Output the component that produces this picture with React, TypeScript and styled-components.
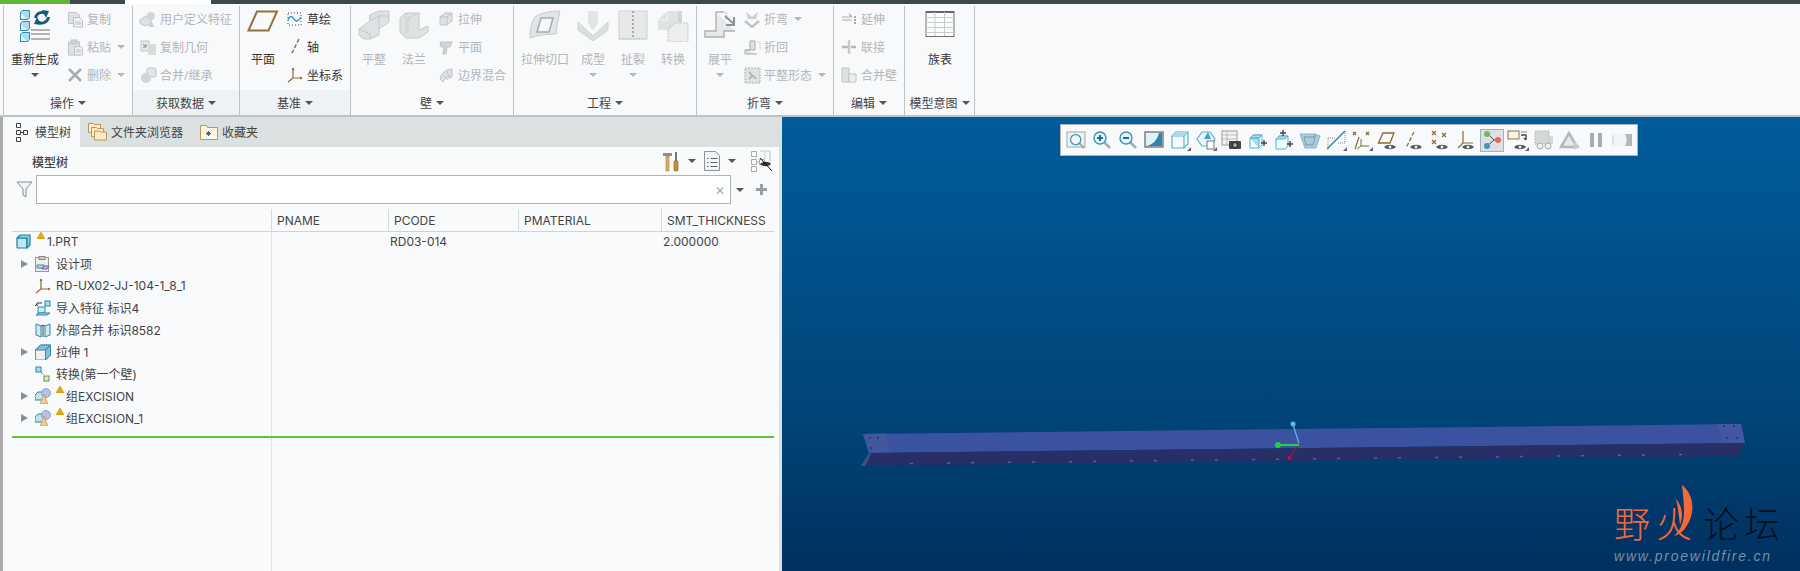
import React from "react";
import styled, { createGlobalStyle } from "styled-components";

const GlobalStyle = createGlobalStyle`
  html, body { margin: 0; padding: 0; background: #f8f9fb; }
  * { box-sizing: border-box; }
  body { font-family: "Noto Sans", "Noto Sans CJK SC", sans-serif; font-size: 12px; color: #444; }
`;

const CJK = `"Noto Sans", "Noto Sans CJK SC", sans-serif`;
const GRID = "259px 117px 130px 143px 113px";

// ---------- icons ----------
const Glyph = styled.svg`
  display: block;
  flex: none;
`;

type GlyphProps = { w: number; h: number; children: React.ReactNode };
const G = ({ w, h, children }: GlyphProps) => (
  <Glyph width={w} height={h} viewBox={`0 0 ${w} ${h}`} fill="none">
    {children}
  </Glyph>
);

const CUBE = "#a9dcec";
const BLUE = "#2f86a8";
const BROWN = "#8a6a30";
const GR = "#bfc3c5";
const GF = "#dfe2e3";

const Cube = ({ x, y, s = 9 }: { x: number; y: number; s?: number }) => (
  <g>
    <rect x={x} y={y + 2} width={s - 2} height={s - 2} fill="#dff3f9" stroke={BLUE} />
    <path d={`M${x} ${y + 2}l2-2h${s - 2}v${s - 2}l-2 2`} fill={CUBE} stroke={BLUE} />
  </g>
);

const Regen = () => (
  <G w={30} h={32}>
    <Cube x={0.5} y={0.5} />
    <Cube x={0.5} y={11.500} />
    <Cube x={0.5} y={22.500} />
    <path d="M15.500 8a6.500 6.500 0 0 1 10-4.500" stroke="#14597f" strokeWidth="2.800" />
    <path d="M22 0l7 1-3 7z" fill="#14597f" />
    <path d="M28.500 7a6.500 6.500 0 0 1-10 5" stroke="#14597f" strokeWidth="2.800" />
    <path d="M21 15l-7-1 3-7z" fill="#14597f" />
    <path d="M11 20h19M11 24h19M11 29h19" stroke="#9a9a9a" strokeWidth="1.400" />
  </G>
);
const CopyI = () => (
  <G w={17} h={17}>
    <path d="M1.500 1.500h8l3 3v8h-11z" fill={GF} stroke={GR} />
    <path d="M6.500 6.500h6l3 3v6.500h-9z" fill="#eef0f1" stroke={GR} />
    <path d="M8 11h6M8 13h6" stroke={GR} />
  </G>
);
const PasteI = () => (
  <G w={17} h={17}>
    <rect x="1.500" y="3" width="11" height="13" fill={GF} stroke={GR} />
    <rect x="4" y="1" width="6" height="4" fill="#cfd2d3" stroke={GR} />
    <path d="M7.500 7.500h6l2 2v6.500h-8z" fill="#eef0f1" stroke={GR} />
    <path d="M9 11h5M9 13h5" stroke={GR} />
  </G>
);
const DeleteI = () => (
  <G w={16} h={16}>
    <path d="M2 2l12 12M14 2L2 14" stroke="#a9acae" strokeWidth="2.600" />
  </G>
);
const UdfI = () => (
  <G w={18} h={17}>
    <path d="M1 9l6-4 5 2v5l-6 3-5-3z" fill={GF} stroke={GR} />
    <circle cx="12" cy="5" r="4" fill="#d2d5d6" />
    <path d="M9 16l3-8 3 8z" fill="#cfd2d3" />
  </G>
);
const CopyGeoI = () => (
  <G w={17} h={17}>
    <rect x="1" y="2" width="8" height="10" fill="#e6e8e9" stroke={GR} />
    <rect x="8" y="5" width="8" height="11" fill="#d8dbdc" />
    <path d="M3 5l3 3m0-3v3H3" stroke="#888" />
  </G>
);
const MergeI = () => (
  <G w={17} h={17}>
    <rect x="7" y="1" width="9" height="9" rx="2" fill="#e3e5e6" stroke={GR} />
    <circle cx="6" cy="11" r="5" fill="#d2d5d6" />
  </G>
);
const PlaneI = () => (
  <G w={32} h={22}>
    <path d="M1.500 20.500L10 1.500h20l-8.500 19z" stroke="#90733c" strokeWidth="2" />
  </G>
);
const SketchI = () => (
  <G w={16} h={16}>
    <rect x="1" y="2" width="13" height="12" stroke="#444" strokeDasharray="1 2" />
    <path d="M1 9c2-5 4-4 6-1s4 3 7-2" stroke="#2e9bd6" strokeWidth="1.400" />
  </G>
);
const AxisI = () => (
  <G w={16} h={18}>
    <path d="M12 1L4 17" stroke={BROWN} strokeWidth="1.400" strokeDasharray="4 2" />
  </G>
);
const CsysI = () => (
  <G w={16} h={16}>
    <path d="M6 1v10M6 11h9M6 11l-5 4" stroke={BROWN} strokeWidth="1.200" />
    <path d="M4.500 3L6 .5 7.500 3zM13 9.500l2.500 1.500-2.500 1.500z" fill={BROWN} />
  </G>
);
const FlatI = () => (
  <G w={32} h={30}>
    <path d="M1 19l11-8V5l9-4h10v11l-10 7v6l-9 4H6l-5-4z" fill="#dfe2e3" stroke="#c6c9cb" />
    <path d="M12 11l9-5v13M1 19l11 5v5M12 5v6M21 6h10" stroke="#c2c5c7" />
  </G>
);
const FlangeI = () => (
  <G w={32} h={30}>
    <path d="M2 8l6-5h13v17l9-4v6l-9 6H8l-6-6z" fill="#dfe2e3" stroke="#c6c9cb" />
    <path d="M8 3v21M21 3L10 8v14" stroke="#c2c5c7" strokeDasharray="2 1" />
  </G>
);
const ExtrudeI = () => (
  <G w={14} h={16}>
    <path d="M1 6l5-4h7v8l-5 4H1z" fill={GF} stroke={GR} />
    <path d="M1 6h7v8M8 6l5-4" stroke={GR} />
  </G>
);
const PlanarI = () => (
  <G w={14} h={16}>
    <path d="M1 3h12l-2 5H8l-1 7H4l1-7H2z" fill="#d2d5d6" stroke={GR} />
  </G>
);
const BlendI = () => (
  <G w={14} h={16}>
    <path d="M1 12C2 6 7 2 13 2v8c-5 0-8 2-9 5z" fill={GF} stroke={GR} />
    <path d="M4 8l5 5M8 4l3 8" stroke={GR} />
  </G>
);
const CutI = () => (
  <G w={32} h={30}>
    <path d="M1 28c0-8 1-16 5-21 6-4 15-6 25-6-2 8-3 15-4 23-9 0-18 1-26 4z" fill="#e2e5e6" stroke="#c9cccd" />
    <path d="M8 22l4-14h12l-4 14z" fill="#f6f7f8" stroke="#a9adaf" strokeWidth="1.600" />
  </G>
);
const FormI = () => (
  <G w={32} h={32}>
    <path d="M11 1h10v12l-5 8-5-8z" fill="#e2e5e6" />
    <path d="M1 12l15 14 15-14v8L16 31 1 20z" fill="#dcdfe0" stroke="#cfd2d3" />
  </G>
);
const RipI = () => (
  <G w={30} h={30}>
    <rect x="1" y="1" width="28" height="28" fill="#e6e8e9" stroke="#cfd2d3" />
    <path d="M15 1v28" stroke="#aaa" strokeDasharray="2 2" strokeWidth="2" />
    <path d="M1 29h28" stroke="#bbb" strokeDasharray="1 1" />
  </G>
);
const ConvertI = () => (
  <G w={32} h={32}>
    <path d="M1 10l9-9h11v19H1z" fill="#e0e3e4" />
    <path d="M10 1v9H1" stroke="#f5f6f7" />
    <path d="M11 20l7-7h13v19H11z" fill="#eceeef" stroke="#c4c7c9" strokeDasharray="2 1" />
    <path d="M21 1h4v12h-4z" fill="#d2d5d6" />
  </G>
);
const UnfoldI = () => (
  <G w={32} h={30}>
    <path d="M12 2h7M12 2v19H1v6h19v-6h11" stroke="#aeb1b3" strokeWidth="1.400" fill="#e6e8e9" />
    <path d="M19 2h3v8" stroke="#bbb" strokeDasharray="2 1" />
    <path d="M21 6l9 8m0-7v8h-8" stroke="#8f9294" strokeWidth="2" />
  </G>
);
const BendI = () => (
  <G w={17} h={17}>
    <path d="M2 1l6 5 6-5-2 7h-8z" fill="#cdd0d1" />
    <path d="M1 10l7 6 7-6" stroke={GR} strokeWidth="2.400" />
  </G>
);
const BendBackI = () => (
  <G w={17} h={15}>
    <path d="M1 10h5V1h5v9H1v4h12" fill={GF} stroke="#a9acae" />
    <path d="M13 2h3v9" stroke={GR} strokeDasharray="1 1" />
  </G>
);
const FlatFormI = () => (
  <G w={17} h={17}>
    <rect x="1" y="1" width="15" height="15" fill={GF} stroke="#aeb1b3" strokeDasharray="2 1" />
    <path d="M5 5l7 7M5 12l3-3" stroke="#a9acae" strokeWidth="1.500" />
  </G>
);
const ExtendI = () => (
  <G w={16} h={16}>
    <path d="M1 6h10M1 9h10M8 3l3 3" stroke="#a9acae" strokeWidth="1.200" />
    <path d="M14 5v9" stroke="#a9acae" strokeWidth="2" strokeDasharray="2 1" />
  </G>
);
const JoinI = () => (
  <G w={16} h={16}>
    <path d="M1 8h6M10 8h5" stroke="#b5b8ba" strokeWidth="2.400" />
    <path d="M8 1v14" stroke="#c9cccd" strokeWidth="2.400" />
  </G>
);
const MergeWallI = () => (
  <G w={16} h={16}>
    <path d="M1 1h7v14H1z" fill={GF} stroke={GR} />
    <path d="M8 7h7v8H8z" fill="#eceeef" stroke={GR} />
  </G>
);
const TableI = () => (
  <G w={30} h={28}>
    <rect x="1" y="1.500" width="28" height="25" fill="#fbfcfc" stroke="#707070" />
    <path d="M1 2h28" stroke="#666" strokeWidth="2" />
    <path d="M1 7.500h28M1 12.500h28M1 17.500h28M1 22.500h28M10 2v24M19.500 2v24" stroke="#c9cccd" />
  </G>
);

// toolbar
const Corner = () => <path d="M22 22h-4l4-4z" fill="#666" />;
const Lens = ({ mark }: { mark?: "plus" | "minus" }) => (
  <g>
    <path d="M13 13l6 6" stroke="#a9acae" strokeWidth="2.500" />
    <circle cx="9" cy="9" r="6" fill={mark ? "#e8f5fa" : "#eef6fa"} stroke="#3a93b5" strokeWidth="1.400" />
    {mark && <path d="M6 9h6" stroke="#14709c" strokeWidth="2" />}
    {mark === "plus" && <path d="M9 6v6" stroke="#14709c" strokeWidth="2" />}
  </g>
);
const Eye = () => (
  <g>
    <path d="M7 18c3-3 9-3 12 0-3 3-9 3-12 0z" fill="#555" />
    <circle cx="13" cy="18" r="1.500" fill="#eee" />
  </g>
);
const TB = ({ children }: { children: React.ReactNode }) => <G w={22} h={22}>{children}</G>;
const BoxCube = () => (
  <g>
    <path d="M3 7l4-4h12v12l-4 4H3z" fill="#f2fafc" stroke="#5fb0cb" strokeWidth="1.200" />
    <path d="M3 7h12v12M15 7l4-4" stroke="#5fb0cb" strokeWidth="1.200" />
    <path d="M3 7l4-4h12l-4 4z" fill={CUBE} />
  </g>
);
const toolbarIcons: React.ReactNode[] = [
  <TB key="1"><rect x="2" y="3" width="18" height="15" fill="#eef0f1" stroke="#a5a8aa" /><g transform="translate(3 3) scale(.85)"><Lens /></g></TB>,
  <TB key="2"><Lens mark="plus" /></TB>,
  <TB key="3"><Lens mark="minus" /></TB>,
  <TB key="4"><rect x="2" y="3" width="18" height="15" fill="#dff0f6" stroke="#777" strokeWidth="1.400" /><path d="M3 17c6-1 11-5 13-13h3v13z" fill="#2f86a8" /></TB>,
  <TB key="5"><BoxCube /><Corner /></TB>,
  <TB key="6"><path d="M2 10l5-7h8l5 7-5 7H7z" fill="#eaf6fa" stroke="#5fb0cb" strokeWidth="1.200" /><path d="M9 10l4-7 3 7z" fill="#4a9fc0" /><rect x="12" y="12" width="7" height="8" fill="#fff" stroke="#777" /><Corner /></TB>,
  <TB key="7"><rect x="1" y="2" width="15" height="14" fill="#f2f3f3" stroke="#999" /><path d="M1 6h15M1 10h15M6 2v14" stroke="#bbb" /><rect x="8" y="12" width="12" height="8" rx="1" fill="#444" /><circle cx="14" cy="16" r="2.500" fill="#aaa" stroke="#222" /></TB>,
  <TB key="8"><path d="M3 9l3-3h9v10l-3 3H3z" fill="#f2fafc" stroke="#5fb0cb" /><path d="M3 9h9v10M3 9l3-3h9l-3 3z" fill={CUBE} stroke="#5fb0cb" /><path d="M14 14h6M17 11v6" stroke="#444" strokeWidth="1.400" /></TB>,
  <TB key="9"><path d="M3 10l3-3h9v10l-3 3H3z" fill="#f2fafc" stroke="#5fb0cb" /><path d="M3 10l3-3h9l-3 3z" fill={CUBE} stroke="#5fb0cb" /><path d="M14 15h6M17 12v6M10 1v6M7 4h6" stroke="#444" strokeWidth="1.400" /></TB>,
  <TB key="10"><path d="M1 5h15l5 2-4 12H6z" fill="#a8ccd8" stroke="#8fb4c2" /><path d="M5 8h11l-2 8H7zM16 5v3" stroke="#6f9fb2" /></TB>,
  <TB key="11"><path d="M2 20L20 2" stroke="#2f86a8" strokeWidth="1.400" /><path d="M3 9h7M3 9v11M20 2v12h-8" stroke="#888" strokeDasharray="1 1" /><Corner /></TB>,
  <TB key="12"><path d="M2 3l3 3m0-3L2 6M15 3l3 3m0-3l-3 3M8 8l-4 12" stroke={BROWN} strokeWidth="1.200" /><path d="M10 10v7h8M10 17l-4 3" stroke={BROWN} /><Corner /></TB>,
  <TB key="13"><path d="M1.500 14L6 4h11l-4 10z" stroke={BROWN} strokeWidth="1.300" /><Eye /></TB>,
  <TB key="14"><path d="M11 3L3 19" stroke={BROWN} strokeWidth="1.300" strokeDasharray="4 2" /><Eye /></TB>,
  <TB key="15"><path d="M3 2l4 4m0-4L3 6M13 4l4 4m0-4l-4 4M3 11l4 4m0-4l-4 4" stroke={BROWN} strokeWidth="1.200" /><Eye /></TB>,
  <TB key="16"><path d="M8 2v12h10M8 14l-5 5" stroke={BROWN} strokeWidth="1.200" /><Eye /></TB>,
  <TB key="17"><path d="M7 5l6 6-7 6M13 11h4" stroke="#555" /><circle cx="6" cy="5" r="3" fill="#7cb26b" /><circle cx="6" cy="17" r="3" fill="#4b93b5" /><circle cx="17" cy="11" r="3" fill="#e06a6a" /></TB>,
  <TB key="18"><rect x="1" y="2" width="11" height="8" fill="#fdf3d8" stroke="#777" /><path d="M14 6h5v5m0 0l-2-2" stroke="#444" strokeWidth="1.300" /><path d="M14 3h6" stroke="#888" /><Eye /><Corner /></TB>,
  <TB key="19"><rect x="2" y="2" width="14" height="13" fill="#d5d8d9" stroke="#bbb" strokeDasharray="2 1" /><path d="M16 7h4v8h-4z" fill="#d5d8d9" /><circle cx="7" cy="17" r="3" fill="#eee" stroke="#aaa" /><circle cx="15" cy="17" r="3" fill="#eee" stroke="#aaa" /></TB>,
  <TB key="20"><path d="M2 18L10 4l8 14z" stroke="#b5b8ba" strokeWidth="2.600" fill="#e6e8e9" /><path d="M15 13l6 4-6 4z" fill="#c9cccd" /></TB>,
  <TB key="21"><rect x="5" y="4" width="4" height="14" fill="#a9acae" /><rect x="13" y="4" width="4" height="14" fill="#a9acae" /></TB>,
  <TB key="22"><path d="M1 5h20v12H1z" fill="#dcdfe0" /><path d="M1 5h11c4 0 5 3 5 6s-1 6-5 6H1c3-3 3-9 0-12z" fill="#f3f4f5" /><path d="M14 5h7v12h-7c2-3 2-9 0-12z" fill="#b5b8ba" /></TB>,
];

// tree + tabs
const TreeTabI = () => (
  <G w={14} h={20}>
    <path d="M1.500 1.500h4v4h-4zM1.500 8.500h4v4h-4zM1.500 15.500h4v4h-4zM8.500 8.500h4v4h-4zM5.500 10.500h3" stroke="#444" />
  </G>
);
const Folder = ({ x, y }: { x: number; y: number }) => (
  <g>
    <path d={`M${x} ${y}h5l1 1h6v8h-12z`} fill="#fbeac3" stroke="#b69a5c" />
  </g>
);
const FoldersI = () => (
  <G w={19} h={18}>
    <Folder x={0.5} y={0.5} />
    <Folder x={3.5} y={4.5} />
    <Folder x={6.5} y={8} />
  </G>
);
const StarFolderI = () => (
  <G w={18} h={16}>
    <path d="M.5 1.500h6l1 2h10v12H.5z" fill="#fdf6e0" stroke="#b69a5c" />
    <path d="M6 9.500h5M8.500 7v5M6.800 7.800l3.400 3.400M10.200 7.800l-3.400 3.400" stroke="#1a6d9c" />
  </G>
);
const HammerI = () => (
  <G w={18} h={21}>
    <path d="M1 2h9v3H1z" fill="#8a8f93" />
    <rect x="4" y="5" width="3" height="15" fill="#d5b26a" stroke="#a08040" strokeWidth=".6" />
    <rect x="13" y="1" width="2" height="9" fill="#777" />
    <rect x="12" y="10" width="4" height="10" rx="1" fill="#c4962f" stroke="#7d5f1e" strokeWidth=".6" />
  </G>
);
const DocListI = () => (
  <G w={16} h={20}>
    <path d="M.5.500h11l4 4v15H.5z" fill="#f3f5f5" stroke="#8e9496" />
    <path d="M3 7.500h1.500M3 11.500h1.500M3 15.500h1.500M6.500 7.500h7M6.500 11.500h7M6.500 15.500h7" stroke="#667" />
  </G>
);
const TreeEyeI = () => (
  <G w={22} h={22}>
    <path d="M1.500 1.500h5v5h-5zM1.500 9.500h5v5h-5zM1.500 16.500h5v5h-5zM9.500 9.500h5v5h-5zM6.500 12h3" stroke="#aaa" />
    <path d="M10 1h10v13M15 1v8M20 1v8" stroke="#c9cccd" />
    <path d="M10 14c3-3 8-3 11 0-3 3-8 3-11 0z" fill="#333" />
    <path d="M10 8l12 13" stroke="#111" />
  </G>
);
const FunnelI = () => (
  <G w={17} h={17}>
    <path d="M1 1h15l-6 7v8l-3-2V8z" fill="#f2f3f4" stroke="#8a8f92" />
  </G>
);
const PlusI = () => (
  <G w={11} h={11}>
    <path d="M5.500 0v11M0 5.500h11" stroke="#9a9d9f" strokeWidth="3" />
  </G>
);
const WarnI = () => (
  <G w={8} h={7}>
    <path d="M4 0l4 7H0z" fill="#e8a90c" stroke="#b58400" strokeWidth=".5" />
  </G>
);
const PartI = () => (
  <G w={15} h={15}>
    <rect x="1" y="4" width="10" height="10" rx="1" fill="#bfe8f5" stroke="#1f7fa5" strokeWidth="1.200" />
    <path d="M1 4l3-3h10v10l-3 3V4z" fill="#8ed0e6" stroke="#1f7fa5" strokeWidth="1.200" />
  </G>
);
const DesignI = () => (
  <G w={15} h={16}>
    <rect x=".5" y="1.500" width="13" height="14" fill="#eceeee" stroke="#999" />
    <rect x="4" y=".5" width="6" height="3" fill="#ccc" stroke="#888" />
    <path d="M2 9h7l-1 3H2z" fill="#b9dcea" stroke="#3a86a8" />
    <path d="M7 13l2-3h5l-2 3z" fill="#cdb6e6" stroke="#7a58a8" />
  </G>
);
const ImportI = () => (
  <G w={16} h={16}>
    <rect x="10" y="1" width="5" height="5" fill={CUBE} stroke={BLUE} />
    <path d="M7 3H2v3M2 4L0 6" stroke="#333" />
    <rect x="3" y="7" width="7" height="6" fill="#cfeaf3" stroke={BLUE} />
    <path d="M1 15l3-2h11l-3 2z" fill={CUBE} stroke={BLUE} />
  </G>
);
const ExtMergeI = () => (
  <G w={16} h={16}>
    <path d="M1 2l5 2v11l-5-2zM15 2l-5 2v11l5-2z" fill="#cfeaf3" stroke={BLUE} />
    <path d="M6 4c2-1 3-1 4 0M8 3v12" stroke="#444" />
  </G>
);
const ExtrudeTreeI = () => (
  <G w={16} h={16}>
    <path d="M.5 6l5-5h10v10l-5 5H.5z" fill="#f0f1f1" stroke="#889" />
    <path d="M.5 6l5-5h10l-5 5zM10.500 6l5-5v10l-5 5z" fill="#82c3dc" stroke="#3a86a8" />
  </G>
);
const ConvertTreeI = () => (
  <G w={16} h={16}>
    <rect x="1" y="1" width="5" height="5" fill={CUBE} stroke={BLUE} />
    <path d="M6 6l3 3" stroke="#333" strokeDasharray="1 1" />
    <rect x="9" y="10" width="5" height="5" fill="#d3ecc4" stroke="#5f9a40" />
  </G>
);
const GroupI = () => (
  <G w={16} h={16}>
    <path d="M0 7l3-3h7v8H0z" fill="#bfe3ef" stroke={BLUE} />
    <circle cx="11" cy="5" r="4.500" fill="#b7c2e6" stroke="#6c7ab0" strokeWidth=".6" />
    <path d="M5 16l4-10 4 10z" fill="#ecc98f" stroke="#b58e4f" strokeWidth=".6" />
  </G>
);

// ---------- layout ----------
const Page = styled.div`
  width: 1800px;
  height: 571px;
  overflow: hidden;
  display: flex;
  flex-direction: column;
  font-family: ${CJK};
`;

const TopStrip = styled.div`
  height: 4px;
  flex: none;
  display: grid;
  grid-template-columns: 70px 55px 86px 1fr;
  background: #3c4a4b;
`;
const StripPart = styled.div<{ $c: string }>`
  background: ${(p) => p.$c};
`;

const Ribbon = styled.div`
  height: 113px;
  flex: none;
  display: flex;
  padding: 2px 0 0 3px;
  background: #f8f9fb;
  border-bottom: 2px solid #bcc3c4;
`;

const Group = styled.section<{ $w: number }>`
  width: ${(p) => p.$w}px;
  flex: none;
  display: flex;
  flex-direction: column;
  border-right: 1px solid #bcc3c4;
  &:first-child {
    border-left: 1px solid #bcc3c4;
  }
`;
const GroupBody = styled.div<{ $pad: number; $gap: number }>`
  flex: 1;
  display: flex;
  padding-left: ${(p) => p.$pad}px;
  gap: ${(p) => p.$gap}px;
`;
const GroupFoot = styled.div<{ $tint?: boolean }>`
  height: 25px;
  display: flex;
  align-items: center;
  justify-content: center;
  gap: 4px;
  color: #444;
  background: ${(p) => (p.$tint ? "#eff2f4" : "transparent")};
`;

const Caret = styled.span<{ $off?: boolean }>`
  display: inline-block;
  flex: none;
  width: 0;
  height: 0;
  border-left: 4px solid transparent;
  border-right: 4px solid transparent;
  border-top: 4px solid ${(p) => (p.$off ? "#b5b8ba" : "#555")};
`;

const BigBtn = styled.div<{ $w: number; $off?: boolean }>`
  width: ${(p) => p.$w}px;
  flex: none;
  display: flex;
  flex-direction: column;
  align-items: center;
  padding-top: 4px;
  color: ${(p) => (p.$off ? "#b3b6b8" : "#333")};
`;
const BigIcon = styled.div`
  height: 38px;
  display: flex;
  align-items: flex-start;
  justify-content: center;
`;
const BigLabel = styled.div`
  height: 16px;
  line-height: 16px;
  margin: 4px 0 5px;
  white-space: nowrap;
`;

const SmallCol = styled.div`
  display: flex;
  flex-direction: column;
  gap: 4px;
  padding-top: 1px;
`;
const SmallBtn = styled.div<{ $off?: boolean }>`
  height: 24px;
  display: flex;
  align-items: center;
  gap: 4px;
  white-space: nowrap;
  color: ${(p) => (p.$off ? "#b3b6b8" : "#333")};
  ${Caret} {
    margin-left: 2px;
  }
`;
const SmallIcon = styled.div`
  width: 16px;
  display: flex;
  justify-content: center;
  flex: none;
`;

const Main = styled.div`
  flex: 1;
  min-height: 0;
  display: flex;
`;

const Panel = styled.div`
  width: 782px;
  flex: none;
  display: flex;
  flex-direction: column;
  font-family: "Inter", "Noto Sans CJK SC", sans-serif;
  background: #f8fafb;
  border-left: 3px solid #a9abab;
  border-right: 3px solid #dce0e0;
`;
const Tabs = styled.div`
  height: 30px;
  flex: none;
  display: flex;
  background: #dbe0e0;
`;
const Tab = styled.div<{ $active?: boolean }>`
  display: flex;
  align-items: center;
  gap: ${(p) => (p.$active ? 6 : 4)}px;
  padding: 0 9px 1px ${(p) => (p.$active ? 12 : 8)}px;
  background: ${(p) => (p.$active ? "#f8fafb" : "transparent")};
  color: #444;
`;
const TitleRow = styled.div`
  height: 28px;
  flex: none;
  display: flex;
  align-items: center;
  padding: 0 7px 0 29px;
  font-weight: 500;
  color: #444;
`;
const TitleText = styled.span`
  flex: 1;
`;
const TitleTools = styled.div`
  display: flex;
  align-items: center;
  gap: 8px;
`;
const EyeSlot = styled.div`
  margin-left: 6px;
`;
const SearchRow = styled.div`
  height: 29px;
  flex: none;
  display: flex;
  align-items: center;
  padding-left: 13px;
`;
const SearchBox = styled.div`
  width: 695px;
  height: 29px;
  margin-left: 3px;
  margin-right: 5px;
  display: flex;
  align-items: center;
  justify-content: flex-end;
  padding-right: 5px;
  background: #fff;
  border: 1px solid #a9b5b8;
  color: #aaa;
  font-size: 15px;
`;
const AddSlot = styled.div`
  margin-left: 12px;
`;
const Table = styled.div`
  flex: 1;
  min-height: 0;
  margin: 5px 5px 0 9px;
  display: flex;
  flex-direction: column;
`;
const HeaderRow = styled.div`
  height: 23px;
  flex: none;
  display: grid;
  grid-template-columns: ${GRID};
  border-bottom: 1px solid #cfd3d5;
`;
const HeaderCell = styled.div`
  display: flex;
  align-items: center;
  padding: 1px 0 0 5px;
  color: #444;
  font-size: 12px;
  border-left: 1px solid #d5d9db;
  white-space: nowrap;
  &:first-child {
    border-left: none;
  }
`;
const TableBody = styled.div`
  flex: 1;
  background: linear-gradient(#dfe3e5, #dfe3e5) 259px 0 / 1px 100% no-repeat;
`;
const TreeRow = styled.div`
  height: 22px;
  padding-bottom: 3px;
  display: grid;
  grid-template-columns: ${GRID};
  align-items: center;
`;
const TreeCell = styled.div<{ $root?: boolean }>`
  display: flex;
  align-items: center;
  padding-left: ${(p) => (p.$root ? 4 : 9)}px;
  white-space: nowrap;
`;
const Arrow = styled.span<{ $on?: boolean }>`
  width: 14px;
  flex: none;
  height: 0;
  border-top: 4.500px solid transparent;
  border-bottom: 4.500px solid transparent;
  border-left: 7px solid ${(p) => (p.$on ? "#8c9092" : "transparent")};
`;
const NodeIcon = styled.div`
  width: 21px;
  flex: none;
  display: flex;
`;
const WarnMark = styled.span`
  margin: -13px 2px 0 0;
  flex: none;
`;
const ValueCell = styled.div<{ $shift: number }>`
  padding-left: ${(p) => p.$shift}px;
  white-space: nowrap;
`;
const GreenLine = styled.div`
  height: 2px;
  margin-top: 6px;
  background: #5cc43f;
`;

const Viewport = styled.div`
  flex: 1;
  position: relative;
  overflow: hidden;
  background: linear-gradient(#005c9b 0%, #004477 67%, #00305f 100%);
`;
const FloatBar = styled.div`
  position: absolute;
  left: 278px;
  top: 7px;
  width: 578px;
  height: 32px;
  display: flex;
  align-items: center;
  gap: 2px;
  padding-left: 3px;
  background: #f7f9fb;
  border: 1px solid #a9b3b8;
`;
const FloatBtn = styled.div<{ $active?: boolean }>`
  width: 24px;
  height: 23px;
  flex: none;
  display: flex;
  align-items: center;
  justify-content: center;
  background: ${(p) => (p.$active ? "#dbe0e3" : "transparent")};
  border: 1px solid ${(p) => (p.$active ? "#a7b0b5" : "transparent")};
`;
const Scene = styled.svg`
  position: absolute;
  left: 0;
  top: 0;
`;
const Logo = styled.div`
  position: absolute;
  left: 832px;
  top: 385px;
  width: 180px;
`;
const LogoTitle = styled.div`
  display: flex;
  font-family: "Noto Sans CJK SC", sans-serif;
  font-size: 36px;
  line-height: 40px;
  font-weight: 300;
  letter-spacing: 6px;
`;
const LogoOrange = styled.span`
  color: #f4683a;
`;
const LogoDark = styled.span`
  color: #060d1c;
  margin-left: 5px;
  letter-spacing: 5px;
`;
const LogoUrl = styled.div`
  margin-top: 6px;
  font-family: "Liberation Sans", sans-serif;
  font-style: italic;
  font-size: 14px;
  letter-spacing: 1.800px;
  color: #7a8ea6;
`;
const Flame = styled.svg`
  position: absolute;
  left: 54px;
  top: -17px;
`;

// ---------- data ----------
type Node = { icon: React.ReactNode; label: string; arrow?: boolean; warn?: boolean };
const nodes: Node[] = [
  { icon: <DesignI />, label: "设计项", arrow: true },
  { icon: <CsysI />, label: "RD-UX02-JJ-104-1_8_1" },
  { icon: <ImportI />, label: "导入特征 标识4" },
  { icon: <ExtMergeI />, label: "外部合并 标识8582" },
  { icon: <ExtrudeTreeI />, label: "拉伸 1", arrow: true },
  { icon: <ConvertTreeI />, label: "转换(第一个壁)" },
  { icon: <GroupI />, label: "组EXCISION", arrow: true, warn: true },
  { icon: <GroupI />, label: "组EXCISION_1", arrow: true, warn: true },
];

const Small = ({ icon, label, off = true, caret }: { icon: React.ReactNode; label: string; off?: boolean; caret?: boolean }) => (
  <SmallBtn $off={off}>
    <SmallIcon>{icon}</SmallIcon>
    {label}
    {caret && <Caret $off={off} />}
  </SmallBtn>
);

const Big = ({ icon, label, w = 32, off = true, caret }: { icon: React.ReactNode; label: string; w?: number; off?: boolean; caret?: boolean }) => (
  <BigBtn $w={w} $off={off}>
    <BigIcon>{icon}</BigIcon>
    <BigLabel>{label}</BigLabel>
    {caret && <Caret $off={off} />}
  </BigBtn>
);

const Foot = ({ label, tint }: { label: string; tint?: boolean }) => (
  <GroupFoot $tint={tint}>
    {label}
    <Caret />
  </GroupFoot>
);

const App: React.FC = () => {
  return (
    <Page>
      <GlobalStyle />
      <TopStrip>
        <StripPart $c="#5fb638" />
        <StripPart $c="#3c4a4b" />
        <StripPart $c="#ffffff" />
        <StripPart $c="#3c4a4b" />
      </TopStrip>

      <Ribbon>
        <Group $w={130}>
          <GroupBody $pad={7} $gap={8}>
            <Big icon={<Regen />} label="重新生成" w={48} off={false} caret />
            <SmallCol>
              <Small icon={<CopyI />} label="复制" />
              <Small icon={<PasteI />} label="粘贴" caret />
              <Small icon={<DeleteI />} label="删除" caret />
            </SmallCol>
          </GroupBody>
          <Foot label="操作" />
        </Group>

        <Group $w={107}>
          <GroupBody $pad={7} $gap={0}>
            <SmallCol>
              <Small icon={<UdfI />} label="用户定义特征" />
              <Small icon={<CopyGeoI />} label="复制几何" />
              <Small icon={<MergeI />} label="合并/继承" />
            </SmallCol>
          </GroupBody>
          <Foot label="获取数据" tint />
        </Group>

        <Group $w={111}>
          <GroupBody $pad={7} $gap={8}>
            <Big icon={<PlaneI />} label="平面" off={false} />
            <SmallCol>
              <Small icon={<SketchI />} label="草绘" off={false} />
              <Small icon={<AxisI />} label="轴" off={false} />
              <Small icon={<CsysI />} label="坐标系" off={false} />
            </SmallCol>
          </GroupBody>
          <Foot label="基准" tint />
        </Group>

        <Group $w={163}>
          <GroupBody $pad={7} $gap={8}>
            <Big icon={<FlatI />} label="平整" />
            <Big icon={<FlangeI />} label="法兰" />
            <SmallCol>
              <Small icon={<ExtrudeI />} label="拉伸" />
              <Small icon={<PlanarI />} label="平面" />
              <Small icon={<BlendI />} label="边界混合" />
            </SmallCol>
          </GroupBody>
          <Foot label="壁" />
        </Group>

        <Group $w={183}>
          <GroupBody $pad={7} $gap={8}>
            <Big icon={<CutI />} label="拉伸切口" w={48} />
            <Big icon={<FormI />} label="成型" caret />
            <Big icon={<RipI />} label="扯裂" caret />
            <Big icon={<ConvertI />} label="转换" />
          </GroupBody>
          <Foot label="工程" />
        </Group>

        <Group $w={137}>
          <GroupBody $pad={7} $gap={8}>
            <Big icon={<UnfoldI />} label="展平" caret />
            <SmallCol>
              <Small icon={<BendI />} label="折弯" caret />
              <Small icon={<BendBackI />} label="折回" />
              <Small icon={<FlatFormI />} label="平整形态" caret />
            </SmallCol>
          </GroupBody>
          <Foot label="折弯" />
        </Group>

        <Group $w={71}>
          <GroupBody $pad={7} $gap={0}>
            <SmallCol>
              <Small icon={<ExtendI />} label="延伸" />
              <Small icon={<JoinI />} label="联接" />
              <Small icon={<MergeWallI />} label="合并壁" />
            </SmallCol>
          </GroupBody>
          <Foot label="编辑" />
        </Group>

        <Group $w={70}>
          <GroupBody $pad={20} $gap={0}>
            <Big icon={<TableI />} label="族表" w={30} off={false} />
          </GroupBody>
          <Foot label="模型意图" />
        </Group>
      </Ribbon>

      <Main>
        <Panel>
          <Tabs>
            <Tab $active>
              <TreeTabI />
              模型树
            </Tab>
            <Tab>
              <FoldersI />
              文件夹浏览器
            </Tab>
            <Tab>
              <StarFolderI />
              收藏夹
            </Tab>
          </Tabs>
          <TitleRow>
            <TitleText>模型树</TitleText>
            <TitleTools>
              <HammerI />
              <Caret />
              <DocListI />
              <Caret />
              <EyeSlot>
                <TreeEyeI />
              </EyeSlot>
            </TitleTools>
          </TitleRow>
          <SearchRow>
            <FunnelI />
            <SearchBox>×</SearchBox>
            <Caret />
            <AddSlot>
              <PlusI />
            </AddSlot>
          </SearchRow>
          <Table>
            <HeaderRow>
              <HeaderCell />
              <HeaderCell>PNAME</HeaderCell>
              <HeaderCell>PCODE</HeaderCell>
              <HeaderCell>PMATERIAL</HeaderCell>
              <HeaderCell>SMT_THICKNESS</HeaderCell>
            </HeaderRow>
            <TableBody>
              <TreeRow>
                <TreeCell $root>
                  <NodeIcon>
                    <PartI />
                  </NodeIcon>
                  <WarnMark>
                    <WarnI />
                  </WarnMark>
                  1.PRT
                </TreeCell>
                <span />
                <ValueCell $shift={2}>RD03-014</ValueCell>
                <span />
                <ValueCell $shift={2}>2.000000</ValueCell>
              </TreeRow>
              {nodes.map((n) => (
                <TreeRow key={n.label}>
                  <TreeCell>
                    <Arrow $on={n.arrow} />
                    <NodeIcon>{n.icon}</NodeIcon>
                    {n.warn && (
                      <WarnMark>
                        <WarnI />
                      </WarnMark>
                    )}
                    {n.label}
                  </TreeCell>
                </TreeRow>
              ))}
              <GreenLine />
            </TableBody>
          </Table>
        </Panel>

        <Viewport>
          <Scene width="1018" height="454" viewBox="782 117 1018 454">
            <path d="M863 434L1741 424l4 19-876 10z" fill="#3b52a0" />
            <path d="M863 434l23-.7 4 19-21 .7z" fill="#4157a0" />
            <path d="M1717 424l24 0 4 19-23 .3z" fill="#4157a0" />
            <path d="M869 453l876-10-7 13-877 10z" fill="#272f66" />
            <path d="M869 453l-8 13h4l6-12z" fill="#3f5290" />
            <path d="M910 463.500L1688 454.500" stroke="#4464b4" strokeWidth="1.500" strokeDasharray="3 34 3 21" />
            <path d="M869 438h2M877 438h2M870 448h2M1723 426h2M1733 426h2M1726 438h2M1736 438h2" stroke="#2a3a80" strokeWidth="2" />
            <path d="M1299 443.500l-6-19" stroke="#63b4ea" strokeWidth="1.200" />
            <ellipse cx="1293" cy="424" rx="2.500" ry="2.500" fill="#63b4ea" />
            <path d="M1299 443.500l-9 14" stroke="#a31a3c" strokeWidth="1.200" />
            <ellipse cx="1289.500" cy="458" rx="2" ry="2.500" fill="#a31a3c" />
            <path d="M1299 445h-21" stroke="#22d43c" strokeWidth="2" />
            <ellipse cx="1278" cy="445" rx="3" ry="3" fill="#22d43c" />
          </Scene>
          <FloatBar>
            {toolbarIcons.map((icon, i) => (
              <FloatBtn key={i} $active={i === 16}>
                {icon}
              </FloatBtn>
            ))}
          </FloatBar>
          <Logo>
            <LogoTitle>
              <LogoOrange>野火</LogoOrange>
              <LogoDark>论坛</LogoDark>
            </LogoTitle>
            <LogoUrl>www.proewildfire.cn</LogoUrl>
            <Flame width="30" height="60" viewBox="0 0 30 60" fill="none">
              <path d="M14 0c12 9 14 28 4 42-3 5-8 8-12 9 7-6 10-15 10-24 0-9-1-18-2-27z" fill="#f4683a" />
              <path d="M8 14c6 7 8 16 4 26-1-9-2-17-4-26z" fill="#f4683a" />
            </Flame>
          </Logo>
        </Viewport>
      </Main>
    </Page>
  );
};

export default App;
